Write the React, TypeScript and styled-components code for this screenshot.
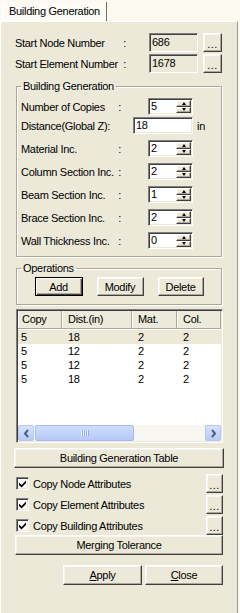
import React from 'react';
import styled, { createGlobalStyle, css } from 'styled-components';

const GlobalStyle = createGlobalStyle`
	html, body {
		margin: 0;
		padding: 0;
		background: #fbf9f0;
	}
	body {
		font-family: "Liberation Sans", Arial, sans-serif;
		font-size: 11px;
		letter-spacing: -0.3px;
		color: #000;
	}
`;

const raised = css`
	border: 1px solid;
	border-color: #fff #404040 #404040 #fff;
	box-shadow: inset -1px -1px 0 #aca899, inset 1px 1px 0 #f7f6f0;
	background: #ece9d8;
`;

const sunken = css`
	border: 1px solid;
	border-color: #808080 #fff #fff #808080;
	box-shadow: inset 1px 1px 0 #404040, inset -1px -1px 0 #ece9d8;
`;

const Window = styled.div`
	width: 240px;
	height: 613px;
	display: flex;
	flex-direction: column;
	background: #fbf9f0;
	overflow: hidden;
`;

const TabStrip = styled.div`
	height: 21px;
	display: flex;
	align-items: flex-end;
	padding-left: 2px;
	box-sizing: border-box;
`;

const Tab = styled.div`
	height: 19px;
	box-sizing: border-box;
	padding: 0 6px 0 6px;
	line-height: 18px;
	background: #fcfbf6;
	border-left: 1px solid #fff;
	border-right: 1px solid #716f64;
	white-space: nowrap;
`;

const Panel = styled.div`
	flex: 1;
	width: 238px;
	box-sizing: border-box;
	background: #ece9d8;
	border-left: 1px solid #fff;
	border-top: 1px solid #fff;
	border-right: 1px solid #919b9c;
	padding: 11px 0 0 13px;
	display: flex;
	flex-direction: column;
	align-items: flex-start;
`;

const Row = styled.div<{ $mt?: number; $h?: number }>`
	display: flex;
	align-items: center;
	height: ${(p) => p.$h ?? 19}px;
	margin-top: ${(p) => p.$mt ?? 0}px;
	white-space: nowrap;
`;

const Caption = styled.span<{ $w: number; $ml?: number }>`
	display: flex;
	justify-content: space-between;
	width: ${(p) => p.$w}px;
	margin-left: ${(p) => p.$ml ?? 0}px;
	white-space: nowrap;
	flex-shrink: 0;
`;

const ReadOnlyBox = styled.div`
	${sunken};
	background: #ece9d8;
	margin-left: 23px;
	width: 49px;
	height: 19px;
	box-sizing: border-box;
	padding-left: 2px;
	line-height: 17px;
`;

const Button = styled.button<{ $w: number; $h: number; $ml?: number; $mt?: number; $default?: boolean }>`
	${raised};
	box-sizing: border-box;
	width: ${(p) => p.$w}px;
	height: ${(p) => p.$h}px;
	margin: ${(p) => p.$mt ?? 0}px 0 0 ${(p) => p.$ml ?? 0}px;
	padding: 0;
	font: inherit;
	letter-spacing: inherit;
	color: #000;
	flex-shrink: 0;
	${(p) =>
		p.$default &&
		css`
			border-color: #000;
			box-shadow: inset 1px 1px 0 #fff, inset -1px -1px 0 #404040, inset -2px -2px 0 #aca899;
		`}
`;

const Dots = styled(Button)`
	padding-top: 3px;
	letter-spacing: 0.5px;
`;

const Group = styled.fieldset<{ $mt: number; $pt: number; $pb: number }>`
	margin: ${(p) => p.$mt}px 0 0 2px;
	width: 206px;
	box-sizing: border-box;
	padding: ${(p) => p.$pt}px 4px ${(p) => p.$pb}px 4px;
	border: 1px solid #aca899;
	box-shadow: inset 1px 1px 0 #fff, 1px 1px 0 #fff;
	min-width: 0;
`;

const Legend = styled.legend`
	padding: 0 2px;
	line-height: 13px;
	font-size: 11px;
`;

const Spinner = styled.div`
	${sunken};
	background: #fff;
	width: 45px;
	height: 17px;
	box-sizing: border-box;
	padding: 1px;
	display: flex;
	flex-shrink: 0;
`;

const SpinText = styled.span`
	flex: 1;
	line-height: 13px;
	padding-left: 1px;
`;

const SpinButtons = styled.div`
	width: 15px;
	display: flex;
	flex-direction: column;
`;

const SpinButton = styled.div`
	${raised};
	flex: 1;
	box-sizing: border-box;
	display: flex;
	align-items: center;
	justify-content: center;
`;

const Arrow = styled.span<{ $down?: boolean }>`
	width: 0;
	height: 0;
	border-left: 2.5px solid transparent;
	border-right: 2.5px solid transparent;
	${(p) => (p.$down ? 'border-top: 3px solid #000;' : 'border-bottom: 3px solid #000;')}
`;

const SpinWrap = styled.div<{ $ml: number }>`
	margin-left: ${(p) => p.$ml}px;
`;

const TextBox = styled.div`
	${sunken};
	background: #fff;
	width: 60px;
	height: 17px;
	box-sizing: border-box;
	padding-left: 2px;
	line-height: 15px;
	flex-shrink: 0;
`;

const Unit = styled.span`
	margin-left: 4px;
`;

const OpsRow = styled.div`
	display: flex;
	justify-content: center;
	gap: 14px;
`;

const ListView = styled.div`
	${sunken};
	margin: 4px 0 0 2px;
	width: 207px;
	height: 134px;
	box-sizing: border-box;
	background: #fff;
	padding: 1px;
	display: flex;
	flex-direction: column;
`;

const cols = '44px 70px 45px 44px';

const Header = styled.div`
	display: grid;
	grid-template-columns: ${cols};
	height: 18px;
	flex-shrink: 0;
`;

const HeaderCell = styled.div<{ $pl: number }>`
	background: #ebeadb;
	border-right: 1px solid #aca899;
	border-bottom: 1px solid #aca899;
	box-shadow: inset 1px 0 0 #fff;
	padding-left: ${(p) => p.$pl}px;
	line-height: 17px;
	white-space: nowrap;
	overflow: hidden;
`;

const Body = styled.div`
	flex: 1;
	padding-top: 1px;
`;

const DataRow = styled.div<{ $selected?: boolean }>`
	display: grid;
	grid-template-columns: ${cols};
	height: 14px;
	line-height: 14px;
	background: ${(p) => (p.$selected ? '#ece9d8' : 'transparent')};
`;

const DataCell = styled.div<{ $pl: number }>`
	padding-left: ${(p) => p.$pl}px;
`;

const ScrollBar = styled.div`
	height: 16px;
	display: flex;
	background: #f7f6f1;
	flex-shrink: 0;
`;

const ScrollArrow = styled.div`
	width: 16px;
	height: 16px;
	box-sizing: border-box;
	border: 1px solid #b5c8f3;
	border-radius: 2px;
	background: linear-gradient(#d6e2fe, #b7cbf8);
	display: flex;
	align-items: center;
	justify-content: center;
	flex-shrink: 0;
`;

const Thumb = styled.div`
	margin-left: 1px;
	width: 99px;
	height: 16px;
	box-sizing: border-box;
	border: 1px solid #a6bbef;
	border-radius: 2px;
	background: linear-gradient(#cfdcfd, #b6caf7);
	display: flex;
	align-items: center;
	justify-content: center;
`;

const Grip = styled.span`
	width: 8px;
	height: 6px;
	background: repeating-linear-gradient(90deg, #eef3ff 0 1px, #8daaf0 1px 2px);
`;

const Track = styled.div`
	flex: 1;
`;

const CheckRow = styled.div<{ $mt: number }>`
	display: flex;
	align-items: center;
	width: 209px;
	height: 19px;
	margin-top: ${(p) => p.$mt}px;
`;

const CheckBox = styled.span`
	${sunken};
	background: #fff;
	width: 13px;
	height: 13px;
	box-sizing: border-box;
	margin-left: 2px;
	display: flex;
	align-items: center;
	justify-content: center;
	flex-shrink: 0;
`;

const CheckLabel = styled.span`
	margin-left: 4px;
	flex: 1;
	white-space: nowrap;
`;

const Footer = styled.div`
	display: flex;
	justify-content: flex-end;
	gap: 3px;
	width: 209px;
	margin-top: 10px;
`;

const spinRows = [
	{ label: 'Number of Copies', value: '5', mt: 0 },
	{ label: 'Material Inc.', value: '2', mt: 6 },
	{ label: 'Column Section Inc.', value: '2', mt: 6 },
	{ label: 'Beam Section Inc.', value: '1', mt: 6 },
	{ label: 'Brace Section Inc.', value: '2', mt: 6 },
	{ label: 'Wall Thickness Inc.', value: '0', mt: 6 },
];

const columns = [
	{ title: 'Copy', pl: 4 },
	{ title: 'Dist.(in)', pl: 6 },
	{ title: 'Mat.', pl: 6 },
	{ title: 'Col.', pl: 6 },
];

const rows = [
	['5', '18', '2', '2'],
	['5', '12', '2', '2'],
	['5', '12', '2', '2'],
	['5', '18', '2', '2'],
];

const checks = ['Copy Node Attributes', 'Copy Element Attributes', 'Copy Building Attributes'];

function Spin({ ml, value }: { ml: number; value: string }) {
	return (
		<SpinWrap $ml={ml}>
			<Spinner>
				<SpinText>{value}</SpinText>
				<SpinButtons>
					<SpinButton><Arrow /></SpinButton>
					<SpinButton><Arrow $down /></SpinButton>
				</SpinButtons>
			</Spinner>
		</SpinWrap>
	);
}

function Check() {
	return (
		<CheckBox>
			<svg width="7" height="8" viewBox="0 0 7 8">
				<path d="M0 2.5 L2.5 5 L7 0.5 L7 3 L2.5 7.5 L0 5 Z" fill="#000" />
			</svg>
		</CheckBox>
	);
}

export default function App() {
	return (
		<>
			<GlobalStyle />
			<Window>
				<TabStrip>
					<Tab>Building Generation</Tab>
				</TabStrip>
				<Panel>
					<Row>
						<Caption $w={111} $ml={1}><span>Start Node Number</span><span>:</span></Caption>
						<ReadOnlyBox>686</ReadOnlyBox>
						<Dots $w={19} $h={19} $ml={5}>...</Dots>
					</Row>
					<Row $mt={2}>
						<Caption $w={111} $ml={1}><span>Start Element Number</span><span>:</span></Caption>
						<ReadOnlyBox>1678</ReadOnlyBox>
						<Dots $w={19} $h={19} $ml={5}>...</Dots>
					</Row>

					<Group $mt={7} $pt={5} $pb={7}>
						<Legend>Building Generation</Legend>
						<Row $h={17}>
							<Caption $w={100}><span>{spinRows[0].label}</span><span>:</span></Caption>
							<Spin ml={27} value={spinRows[0].value} />
						</Row>
						<Row $h={17} $mt={2}>
							<Caption $w={112}><span>Distance(Global Z):</span></Caption>
							<TextBox>18</TextBox>
							<Unit>in</Unit>
						</Row>
						{spinRows.slice(1).map((r) => (
							<Row key={r.label} $h={17} $mt={r.mt}>
								<Caption $w={100}><span>{r.label}</span><span>:</span></Caption>
								<Spin ml={27} value={r.value} />
							</Row>
						))}
					</Group>

					<Group $mt={5} $pt={2} $pb={8}>
						<Legend>Operations</Legend>
						<OpsRow>
							<Button $w={48} $h={19} $default>Add</Button>
							<Button $w={47} $h={19}>Modify</Button>
							<Button $w={46} $h={19}>Delete</Button>
						</OpsRow>
					</Group>

					<ListView>
						<Header>
							{columns.map((c) => (
								<HeaderCell key={c.title} $pl={c.pl}>{c.title}</HeaderCell>
							))}
						</Header>
						<Body>
							{rows.map((r, i) => (
								<DataRow key={i} $selected={i === 0}>
									{r.map((v, j) => (
										<DataCell key={j} $pl={j === 0 ? 3 : 6}>{v}</DataCell>
									))}
								</DataRow>
							))}
						</Body>
						<ScrollBar>
							<ScrollArrow>
								<svg width="7" height="9" viewBox="0 0 7 9">
									<path d="M5 1 L2 4.5 L5 8" stroke="#4d6185" strokeWidth="2" fill="none" />
								</svg>
							</ScrollArrow>
							<Thumb><Grip /></Thumb>
							<Track />
							<ScrollArrow>
								<svg width="7" height="9" viewBox="0 0 7 9">
									<path d="M2 1 L5 4.5 L2 8" stroke="#4d6185" strokeWidth="2" fill="none" />
								</svg>
							</ScrollArrow>
						</ScrollBar>
					</ListView>

					<Button $w={210} $h={20} $mt={5}>Building Generation Table</Button>

					{checks.map((c, i) => (
						<CheckRow key={c} $mt={i === 0 ? 6 : 2}>
							<Check />
							<CheckLabel>{c}</CheckLabel>
							<Dots $w={17} $h={19}>...</Dots>
						</CheckRow>
					))}

					<Button $w={208} $h={20} $ml={1}>Merging Tolerance</Button>

					<Footer>
						<Button $w={79} $h={20}><u>A</u>pply</Button>
						<Button $w={78} $h={20}><u>C</u>lose</Button>
					</Footer>
				</Panel>
			</Window>
		</>
	);
}
